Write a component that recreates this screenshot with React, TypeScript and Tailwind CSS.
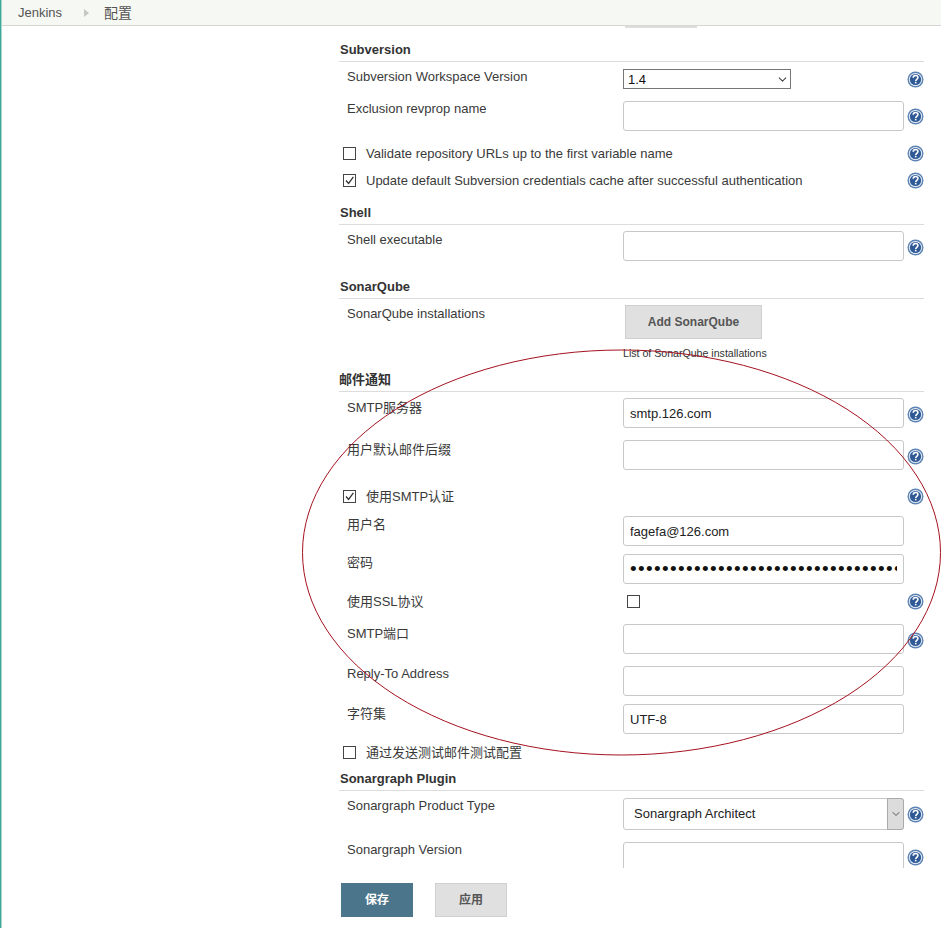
import type { ReactNode } from 'react';
import { ChevronDown } from 'lucide-react';

const HelpIcon = () => (
  <svg width="17" height="17" viewBox="0 0 17 17" className="shrink-0">
    <circle cx="8.5" cy="8.5" r="8" fill="#5b84b4" />
    <circle cx="8.5" cy="8.5" r="6.6" fill="#ffffff" opacity="0.85" />
    <circle cx="8.5" cy="8.5" r="5.6" fill="#2f5a96" />
    <path
      d="M6.2 6.8c0-1.5 1-2.3 2.4-2.3 1.4 0 2.3.8 2.3 2 0 1.8-2.1 1.8-2.1 3.4"
      fill="none"
      stroke="#ffffff"
      strokeWidth="1.6"
    />
    <rect x="7.9" y="10.8" width="1.6" height="1.6" fill="#ffffff" />
  </svg>
);

const Heading = ({ children, className }: { children: ReactNode; className: string }) => (
  <div
    className={`h-[22px] border-b border-[#dcdcdc] pt-px leading-[18px] text-[13px] font-bold text-[#333] ${className}`}
  >
    {children}
  </div>
);

const Row = ({
  label,
  children,
  help = true,
  className,
  labelClass = '',
  helpClass = '',
}: {
  label?: string;
  children: ReactNode;
  help?: boolean;
  className: string;
  labelClass?: string;
  helpClass?: string;
}) => (
  <div className={`grid grid-cols-[284px_281px_20px] ${className}`}>
    <div className={`pl-2 text-[13px] leading-[16px] text-[#3a3a3a] ${labelClass}`}>{label}</div>
    <div>{children}</div>
    <div className={`flex items-center justify-end ${helpClass}`}>{help && <HelpIcon />}</div>
  </div>
);

const TextField = ({ value }: { value?: string }) => (
  <input
    type="text"
    defaultValue={value}
    className="block h-[30px] w-[281px] rounded-[3px] border border-[#c8c8c8] bg-white px-[6px] text-[13px] text-[#222] outline-none"
  />
);

const Box = ({ checked }: { checked?: boolean }) => (
  <span className="flex h-[13px] w-[13px] shrink-0 items-center justify-center border border-[#444] bg-white">
    {checked && (
      <svg width="11" height="11" viewBox="0 0 11 11">
        <path d="M2 5.5 4.6 8.4 9.4 1.8" fill="none" stroke="#333" strokeWidth="1.3" />
      </svg>
    )}
  </span>
);

const CheckRow = ({
  label,
  checked,
  help = true,
  className,
  textClass = 'pt-[2px]',
  helpClass = '',
}: {
  label: string;
  checked?: boolean;
  help?: boolean;
  className: string;
  textClass?: string;
  helpClass?: string;
}) => (
  <div className={`flex h-4 items-center justify-between ${className}`}>
    <label className="flex items-center gap-[10px] pl-1 text-[13px] leading-[16px] text-[#3a3a3a]">
      <Box checked={checked} />
      <span className={textClass}>{label}</span>
    </label>
    {help && (
      <span className={helpClass}>
        <HelpIcon />
      </span>
    )}
  </div>
);

export default function App() {
  return (
    <div className="relative flex h-[928px] w-[941px] overflow-hidden bg-white font-['Liberation_Sans','Noto_Sans_CJK_SC',sans-serif]">
      <div className="w-[2px] shrink-0 border-l border-[#3fa796] bg-[#a8d8cf]" />

      <div className="min-w-0 flex-1">
        {/* Breadcrumb */}
        <div className="flex h-[26px] items-center border-b border-[#d5d8d2] bg-[#f6f8f3] pt-px text-[13px] text-[#555]">
          <span className="ml-4">Jenkins</span>
          <span className="ml-[22px] h-0 w-0 border-y-[4px] border-l-[5px] border-y-transparent border-l-[#c4c8c0]" />
          <span className="ml-[15px] text-[14px]">配置</span>
        </div>

        {/* Form */}
        <div className="ml-[337px] h-[842px] w-[585px] overflow-hidden">
          <div className="ml-[286px] h-[2px] w-[72px] bg-[#dedede]" />

          <Heading className="mt-3 pl-px">Subversion</Heading>
          <Row label="Subversion Workspace Version" className="mt-[7px]">
            <div className="relative h-5 w-[168px]">
              <select className="block h-5 w-full appearance-none border border-[#767676] bg-white pl-1 text-[13px] text-[#111]">
                <option>1.4</option>
              </select>
              <ChevronDown size={13} className="pointer-events-none absolute right-[2px] top-[4px] text-[#444]" />
            </div>
          </Row>
          <Row label="Exclusion revprop name" className="mt-3">
            <TextField />
          </Row>
          <CheckRow label="Validate repository URLs up to the first variable name" className="mt-[14px]" />
          <CheckRow
            label="Update default Subversion credentials cache after successful authentication"
            checked
            className="mt-[11px]"
          />

          <Heading className="mt-[15px] pl-px">Shell</Heading>
          <Row label="Shell executable" labelClass="pt-px" helpClass="pt-[2px]" className="mt-[6px]">
            <TextField />
          </Row>

          <Heading className="mt-4 pl-px">SonarQube</Heading>
          <Row label="SonarQube installations" labelClass="pt-px" help={false} className="mt-[6px]">
            <button className="ml-[2px] block h-[34px] w-[137px] border border-[#cfcfcf] bg-[#e0e0e0] text-[12px] font-bold text-[#555]">
              Add SonarQube
            </button>
            <div className="mt-[7px] text-[10.6px] leading-[15px] text-[#333]">List of SonarQube installations</div>
          </Row>

          <Heading className="mt-[9px]">邮件通知</Heading>
          <Row label="SMTP服务器" labelClass="pt-[2px]" helpClass="pt-[2px]" className="mt-[6px]">
            <TextField value="smtp.126.com" />
          </Row>
          <Row label="用户默认邮件后缀" labelClass="pt-[2px]" helpClass="pt-[2px]" className="mt-3">
            <TextField />
          </Row>
          <CheckRow label="使用SMTP认证" checked textClass="pt-px" helpClass="pt-px" className="mt-[18px]" />
          <Row label="用户名" labelClass="pt-px" help={false} className="mt-3">
            <TextField value="fagefa@126.com" />
          </Row>
          <Row label="密码" labelClass="pt-px" help={false} className="mt-2">
            {/* masked value: the reference shows round dots 8px apart that run past the field edge */}
            <input
              type="password"
              defaultValue="passwordpasswordpasswordpasswordpasswordpassword"
              className="block h-[30px] w-[281px] rounded-[3px] border border-[#c8c8c8] bg-white px-[6px] text-[19px] tracking-[1.35px] text-[#111] outline-none"
            />
          </Row>
          <Row label="使用SSL协议" labelClass="pt-px" className="mt-[9px] h-4">
            <div className="ml-1 mt-[2px]">
              <Box />
            </div>
          </Row>
          <Row label="SMTP端口" labelClass="pt-[2px]" helpClass="pt-[2px]" className="mt-[15px]">
            <TextField />
          </Row>
          <Row label="Reply-To Address" help={false} className="mt-3">
            <TextField />
          </Row>
          <Row label="字符集" labelClass="pt-[2px]" help={false} className="mt-2">
            <TextField value="UTF-8" />
          </Row>
          <CheckRow label="通过发送测试邮件测试配置" help={false} textClass="pt-px" className="mt-[10px]" />

          <Heading className="mt-[9px] pl-px">Sonargraph Plugin</Heading>
          <Row label="Sonargraph Product Type" className="mt-[7px]">
            <div className="relative h-8 w-[281px]">
              <select className="block h-8 w-full appearance-none rounded-[3px] border border-[#c8c8c8] bg-white pl-[10px] text-[13px] text-[#222]">
                <option>Sonargraph Architect</option>
              </select>
              <span className="pointer-events-none absolute inset-y-0 right-0 flex w-[17px] items-center justify-center rounded-r-[3px] border border-[#aaa] bg-[#dcdcdc]">
                <ChevronDown size={12} className="text-[#555]" />
              </span>
            </div>
          </Row>
          <Row label="Sonargraph Version" className="mt-3">
            <TextField />
          </Row>
        </div>

        {/* Bottom bar */}
        <div className="ml-[339px] flex gap-[22px] pt-[15px]">
          <button className="h-[34px] w-[72px] bg-[#4b758b] text-[12px] font-bold text-white">保存</button>
          <button className="h-[34px] w-[72px] border border-[#d0d0d0] bg-[#e0e0e0] text-[12px] font-bold text-[#555]">
            应用
          </button>
        </div>
      </div>

      {/* Hand-drawn annotation */}
      <svg className="pointer-events-none absolute left-0 top-0" width="941" height="928">
        <ellipse cx="621.5" cy="552.5" rx="319" ry="202.5" fill="none" stroke="#a5121f" strokeWidth="1" />
      </svg>
    </div>
  );
}
